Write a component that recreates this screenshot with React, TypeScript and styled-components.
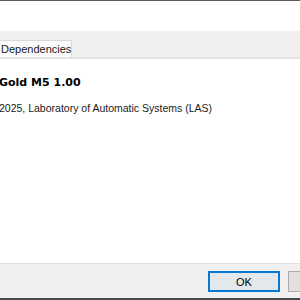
import React from "react";
import styled, { createGlobalStyle } from "styled-components";

const Global = createGlobalStyle`
  html, body { margin: 0; padding: 0; background: #ffffff; }
  body { font-family: "Liberation Sans", Arial, sans-serif; }
`;

const Window = styled.div`
  width: 300px;
  height: 300px;
  overflow: hidden;
  display: flex;
  flex-direction: column;
  background: #ffffff;
`;

const EdgeLine = styled.div`
  height: 1px;
  flex: 0 0 auto;
  background: #5c5c5c;
`;

const Header = styled.div`
  height: 30px;
  flex: 0 0 auto;
  background: #ffffff;
`;

const TabStrip = styled.div`
  height: 26px;
  flex: 0 0 auto;
  background: #f0f0f0;
  display: flex;
  align-items: flex-end;
  border-bottom: 2px solid #e4e4e4;
`;

const Tab = styled.div`
  margin-left: -4px;
  width: 76px;
  height: 17px;
  box-sizing: border-box;
  background: #fbfbfb;
  border: 1px solid #d9d9d9;
  border-bottom: none;
  font-size: 11px;
  color: #1a1a1a;
  display: flex;
  align-items: center;
  padding-left: 4px;
`;

const Content = styled.div`
  flex: 1 1 auto;
  display: flex;
  flex-direction: column;
  padding-top: 17px;
  margin-left: -1px;
`;

const Title = styled.div`
  font-family: "DejaVu Sans", Verdana, sans-serif;
  font-weight: bold;
  font-size: 11px;
  line-height: 14px;
  color: #000000;
`;

const Copyright = styled.div`
  margin-top: 11px;
  font-size: 10.5px;
  line-height: 14px;
  color: #1a1a1a;
`;

const Footer = styled.div`
  height: 35px;
  flex: 0 0 auto;
  box-sizing: border-box;
  background: #f0f0f0;
  border-top: 1px solid #dfdfdf;
  display: flex;
  align-items: center;
  justify-content: flex-end;
  gap: 8px;
  padding-top: 1px;
  margin-right: -60px;
`;

const Button = styled.button<{ $default?: boolean }>`
  width: 72px;
  height: 21px;
  box-sizing: border-box;
  background: ${(p) => (p.$default ? "#e3e8ec" : "#e1e1e1")};
  border: ${(p) => (p.$default ? "2px solid #0a78d0" : "1px solid #adadad")};
  font-family: "Liberation Sans", Arial, sans-serif;
  font-size: 11px;
  color: #000000;
  padding: 0;
`;

const BottomEdge = styled.div`
  height: 2px;
  flex: 0 0 auto;
  background: #4a4a4a;
`;

export default function App() {
  return (
    <Window>
      <Global />
      <EdgeLine />
      <Header />
      <TabStrip>
        <Tab>Dependencies</Tab>
      </TabStrip>
      <Content>
        <Title>Gold M5 1.00</Title>
        <Copyright>2025, Laboratory of Automatic Systems (LAS)</Copyright>
      </Content>
      <Footer>
        <Button $default>OK</Button>
        <Button aria-label="Cancel" />
      </Footer>
      <BottomEdge />
    </Window>
  );
}
